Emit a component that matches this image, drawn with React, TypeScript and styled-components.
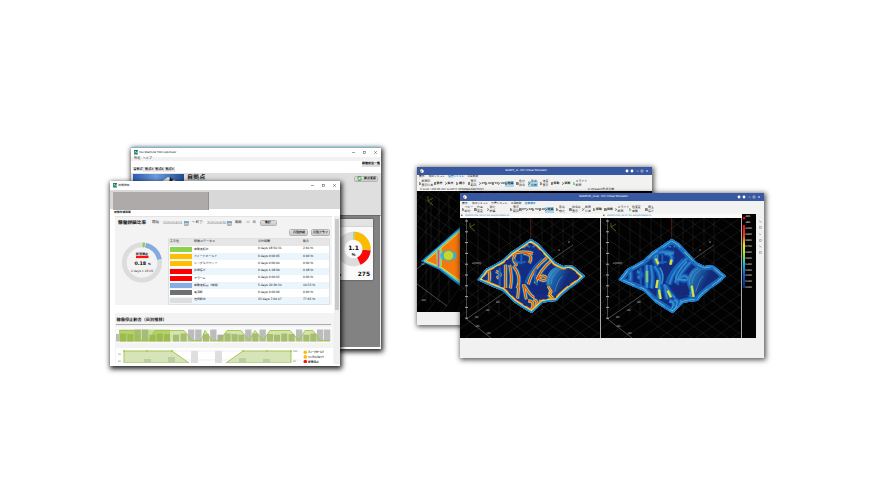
import React from "react";
import styled, { createGlobalStyle } from "styled-components";

const Global = createGlobalStyle`
  * { box-sizing: border-box; }
  body { margin: 0; background: #fff; font-family: "Liberation Sans", "Noto Sans CJK JP", sans-serif; text-rendering: geometricPrecision; }
  svg { display: block; flex: none; }
`;

const Canvas = styled.main`
  position: relative;
  width: 880px;
  height: 496px;
  overflow: hidden;
  background: #fff;
`;

const Window = styled.section<{ $x: number; $y: number; $w: number; $h: number; $accent?: string; $soft?: boolean }>`
  position: absolute;
  left: ${(p) => p.$x}px;
  top: ${(p) => p.$y}px;
  width: ${(p) => p.$w}px;
  height: ${(p) => p.$h}px;
  display: flex;
  flex-direction: column;
  overflow: visible;
  background: #fff;
  border-top: ${(p) => (p.$accent ? `1px solid ${p.$accent}` : "none")};
  box-shadow: ${(p) => (p.$soft ? "1px 1px 5px 1px rgba(0,0,0,.66)" : "1px 2px 5px 1px rgba(0,0,0,.86)")};
`;

const Text = styled.span<{ $s?: number; $w?: number; $c?: string; $b?: boolean; $ml?: number }>`
  flex: none;
  display: inline-block;
  font-size: ${(p) => p.$s ?? 3.4}px;
  line-height: 1.15;
  width: ${(p) => (p.$w ? `${p.$w}px` : "auto")};
  margin-left: ${(p) => p.$ml ?? 0}px;
  color: ${(p) => p.$c ?? "#1a1a1a"};
  font-weight: ${(p) => (p.$b ? 700 : 400)};
  white-space: nowrap;
`;

const Bar = styled.div<{ $h: number; $bg?: string; $pl?: number; $pr?: number }>`
  flex: none;
  display: flex;
  align-items: center;
  height: ${(p) => p.$h}px;
  padding-left: ${(p) => p.$pl ?? 0}px;
  padding-right: ${(p) => p.$pr ?? 0}px;
  background: ${(p) => p.$bg ?? "transparent"};
`;

const Spacer = styled.div`flex: 1;`;

const ControlGroup = styled.div`
  display: flex;
  align-items: center;
  gap: 8px;
`;

const WindowControls = () => (
  <ControlGroup>
    <svg width="3" height="3"><path d="M0 1.5H3" stroke="#666" strokeWidth=".6" /></svg>
    <svg width="3" height="3"><rect x=".4" y=".4" width="2.2" height="2.2" fill="none" stroke="#666" strokeWidth=".6" /></svg>
    <svg width="3" height="3"><path d="M.2 .2 2.8 2.8M2.8 .2 .2 2.8" stroke="#555" strokeWidth=".6" /></svg>
  </ControlGroup>
);

const AppIcon = () => (
  <svg width="4.5" height="4.5" viewBox="0 0 9 9"><rect width="9" height="9" fill="#177d69" /><path d="M2 7V2l5 5V2" fill="none" stroke="#d3eee5" strokeWidth="1.2" /></svg>
);

const GrayButton = styled.button<{ $w: number; $h?: number }>`
  flex: none;
  display: flex;
  align-items: center;
  justify-content: center;
  gap: 2px;
  width: ${(p) => p.$w}px;
  height: ${(p) => p.$h ?? 6.5}px;
  padding: 0;
  border: 1px solid #b4b4b4;
  border-radius: 1.5px;
  background: linear-gradient(#e0e0e0, #cacaca);
`;

const FlatButton = styled(GrayButton)`border: none; border-radius: 0; background: #dcdcdc;`;

const Tab = styled.div<{ $on?: boolean }>`
  height: 5px;
  width: ${(p) => (p.$on ? 12 : 10.2)}px;
  display: flex;
  align-items: center;
  justify-content: center;
  background: ${(p) => (p.$on ? "#fff" : "#ececec")};
  box-shadow: inset -.5px .5px #ccc;
`;

const Hero = styled.div`
  flex: none;
  display: flex;
  height: 42.5px;
  padding: 1px 3px 0 2px;
  background: #dfdfdf;
`;

const HeroButton = styled.div`padding-top: 2px;`;

const DarkArea = styled.div`
  flex: none;
  display: flex;
  justify-content: flex-end;
  height: 132px;
  padding: 3px 7px 0 0;
  background: #828282;
  border-top: 1px solid #6a6a6a;
  border-right: 1px solid #eee;
`;

const Card = styled.div`
  display: flex;
  flex-direction: column;
  width: 40px;
  height: 61px;
  background: #fafafa;
  border-radius: 1px;
  box-shadow: 0 0 2px #333;
`;
const CardHead = styled.div`flex: none; height: 8px; background: #e3e3e3; border-bottom: 1px solid #d4d4d4;`;
const CardDonut = styled.div`flex: none; height: 44.5px; padding: 1.5px 0 0 3px;`;
const CardTotal = styled.div`
  display: flex;
  justify-content: space-between;
  padding: 0 3px 0 6px;
  align-items: center;
  font-family: "DejaVu Sans", sans-serif;
`;

const arc = (cx: number, cy: number, r: number, a: number, b: number) => {
  const pt = (t: number) => [cx + r * Math.sin((t * Math.PI) / 180), cy - r * Math.cos((t * Math.PI) / 180)];
  const [x1, y1] = pt(a);
  const [x2, y2] = pt(b);
  return `M${x1} ${y1}A${r} ${r} 0 ${b - a > 180 ? 1 : 0} 1 ${x2} ${y2}`;
};

const MachineWindow = () => (
  <Window $x={131} $y={147} $w={250} $h={202} $accent="#79b8d4">
    <Bar $h={8.5} $pl={2.5} $pr={4}>
      <AppIcon /><Text $ml={1.3} $s={3.05}>NC Machine Tool Optimizer</Text><Spacer /><WindowControls />
    </Bar>
    <Bar $h={4.5} $bg="#f1f1f1" $pl={3}><Text $s={3.2} $w={8.5}>設定</Text><Text $s={3.2}>ヘルプ</Text></Bar>
    <Bar $h={6} $pr={1}><Spacer /><FlatButton $w={18} $h={5}><Text $s={3} $b $c="#000">稼働状況一覧</Text></FlatButton></Bar>
    <Bar $h={5.5} $pl={1}>
      <Tab $on><Text $s={3.2} $b>自拠点</Text></Tab>
      {["拠点2", "拠点3", "拠点4"].map((t) => <Tab key={t}><Text $s={3.2} $b>{t}</Text></Tab>)}
    </Bar>
    <Hero>
      <svg width="51" height="40" viewBox="0 0 51 40">
        <defs><linearGradient id="sky" x1="0" y1="0" x2="1" y2="0"><stop offset="0" stopColor="#2b5cb0" /><stop offset=".45" stopColor="#6f9cdd" /><stop offset="1" stopColor="#204a96" /></linearGradient></defs>
        <rect width="51" height="40" fill="url(#sky)" />
        <path d="M28 8 35 3 43 7 40 9Z" fill="#e6e8ec" /><path d="M37 3 42 7 40 6 38 9H36Z" fill="#20242b" />
      </svg>
      <Text $ml={3} $s={6.1} $b $c="#222">自拠点</Text>
      <Spacer />
      <HeroButton><GrayButton $w={24}><svg width="5" height="5" viewBox="0 0 5 5"><path d="M.7 2.5A1.8 1.8 0 0 1 4 1.4M4.3 2.5A1.8 1.8 0 0 1 1 3.6" fill="none" stroke="#35a745" strokeWidth="1.1" /></svg><Text $s={3} $b>拠点更新</Text></GrayButton></HeroButton>
    </Hero>
    <DarkArea>
      <Card>
        <CardHead />
        <CardDonut>
          <svg width="37" height="40" viewBox="0 0 37 40">
            <g fill="none" strokeWidth="8">
              <circle cx="17.5" cy="20" r="13.2" stroke="#dcdcdc" />
              <path d={arc(17.5, 20, 13.2, 0, 4)} stroke="#7ccc52" />
              <path d={arc(17.5, 20, 13.2, 5, 93)} stroke="#fdbb00" />
              <path d={arc(17.5, 20, 13.2, 95, 156)} stroke="#fd0808" />
            </g>
            <text x="17.5" y="20.5" textAnchor="middle" fontSize="6" fontWeight="700" fontFamily="DejaVu Sans">1.1</text>
            <text x="17.5" y="26.5" textAnchor="middle" fontSize="4.2" fontWeight="700">%</text>
          </svg>
        </CardDonut>
        <CardTotal><Text $s={4} $b $c="#111">s</Text><Text $s={5.9} $b $c="#111">275</Text></CardTotal>
      </Card>
    </DarkArea>
  </Window>
);

const Ribbon = styled.div`
  flex: none;
  display: flex;
  align-items: flex-start;
  height: 19px;
  padding: 1.5px 0 0 3px;
  background: #d8d8d8;
`;
const RibbonBlock = styled.div`width: 96px; height: 18px; background: #aeaaa9; border-right: 1px solid #959292;`;

const Body = styled.div`
  flex: none;
  display: flex;
  height: 148px;
  padding-left: 3.5px;
`;
const BodyMain = styled.div`width: 220.5px; display: flex; flex-direction: column;`;
const ScrollTrack = styled.div`
  display: flex;
  flex-direction: column;
  align-items: center;
  width: 5.5px;
  background: #efefef;
  &::before { content: ""; width: 4px; height: 91px; margin-top: 3px; background: #c9c9c9; }
`;
const Panel = styled.div<{ $h: number }>`
  flex: none;
  display: flex;
  flex-direction: column;
  height: ${(p) => p.$h}px;
  margin: 0 2px 0 1.5px;
  padding-left: 3px;
  background: #f3f3f3;
  border-top: 1px solid #e4e4e4;
`;
const Summary = styled.div`display: flex; gap: 6px;`;
const ActionRow = styled.div`display: flex; flex: none; justify-content: flex-end; gap: 3px; height: 9.5px; padding-right: 2px;`;

const Table = styled.div`width: 160px; box-shadow: 0 0 0 .5px #ccc;`;
const TableRow = styled.div<{ $head?: boolean; $alt?: boolean }>`
  display: grid;
  grid-template-columns: 24px 64px 45px 1fr;
  align-items: center;
  height: 7.25px;
  background: ${(p) => (p.$head ? "#e6e6e6" : p.$alt ? "#eaf5fc" : "#fff")};
  & > span { padding-left: 1.5px; }
`;
const Swatch = styled.i<{ $c: string }>`height: 5px; margin: 0 .5px 0 1px; background: ${(p) => p.$c};`;

const rows: [string, string, string, string][] = [
  ["#8ed14b", "自動運転中", "0 days 18:59:31", "2.64 %"],
  ["#ffbe00", "フィードホールド", "0 days 0:00:05", "0.00 %"],
  ["#ffbe00", "シングルブロック", "0 days 0:00:04", "0.00 %"],
  ["#fe0000", "非常停止", "0 days 1:18:09", "0.18 %"],
  ["#fe0000", "アラーム", "0 days 0:00:02", "0.00 %"],
  ["#87aee0", "自動運転完（待機）", "5 days 20:36:34", "19.53 %"],
  ["#707070", "電源断", "0 days 0:00:00", "0.00 %"],
  ["#dedede", "通信断中", "23 days 7:04:47", "77.65 %"],
];

const CalendarIcon = () => (
  <svg width="5" height="5" viewBox="0 0 5 5"><rect x=".3" y=".3" width="4.4" height="4.4" fill="#dce5eb" stroke="#788b99" strokeWidth=".5" /><path d="M.3 1.2H4.7" stroke="#4689b5" /><path d="M1 3H4M1 4H4" stroke="#7a8792" strokeWidth=".4" /></svg>
);

const dailyLine = "M119 330H134L141 340H148L155 330H184L192 340H201L205 330L212 340H220L227 330H241L249 340L255 330L263 340L270 330H290L299 340L305 330H313L320 340H330";
const tallBars = [134.5, 142, 188, 195.2, 210.2, 245.2, 259.5, 296, 317, 324];
const shortBars = [120, 127.3, 149.5, 156.7, 164, 173, 180.5, 203, 217.5, 224.5, 231.5, 238.3, 252.3, 267, 274, 281.2, 288.5, 303.3, 310.3];

const DailyChart = () => (
  <svg width="216" height="16" viewBox="116 326.5 216 16">
    <rect x="116" y="326.5" width="216" height="16" fill="#fafafa" />
    <rect x="116" y="333.5" width="3" height="7.5" fill="#bcbcbc" />
    {tallBars.map((x) => <rect key={x} x={x} y="329" width="6.3" height="12" fill="#bcbcbc" />)}
    {shortBars.map((x, i) => <rect key={x} x={x} y={333 + (i % 3) * .6} width="6.1" height={8 - (i % 3) * .6} fill="#aab08f" />)}
    <path d={`${dailyLine}V341H119Z`} fill="#a7cb55" fillOpacity=".46" />
    <rect x="119" y="329" width="51" height="12" fill="#8fbb25" fillOpacity=".45" />
    <path d={dailyLine} fill="none" stroke="#9fc44b" strokeWidth=".9" />
  </svg>
);
const DetailChart = () => (
  <svg width="217" height="15" viewBox="116 348 217 15">
    <rect x="115" y="348" width="218" height="15" fill="#fff" />
    <path d="M123 351H300M123 360H300" stroke="#ddd" strokeWidth=".5" />
    <path d="M124 351H172L189 363H124ZM226 363 243 351H291V363Z" fill="#d7e4b7" stroke="#a7c75b" />
    {[[144, 359], [168, 357], [239, 358], [263, 359]].map(([x, y]) => <rect key={x} x={x} y={y} width="7" height={363 - y} fill="#becda0" />)}
    {[191, 215].map((x) => <rect key={x} x={x} y="351" width="7" height="12" fill="#dedede" />)}
    {[124, 147, 172, 243, 267, 291].map((x) => <circle key={x} cx={x} cy="351" r="1" fill="#a7c75b" />)}
    <g fontSize="2.5" fill="#777"><text x="118" y="355">90</text><text x="118" y="362">80</text><text x="293" y="352">100</text><text x="293" y="362">80</text></g>
    {["フィードホールド", "シングルブロック", "非常停止"].map((t, i) => (
      <g key={t}><circle cx="305.3" cy={352.3 + i * 4.6} r="1.8" fill={i < 2 ? "#ffb900" : "#f11"} /><text x="308" y={353.4 + i * 4.6} fontSize="3" fontWeight="700" fill="#222" textLength={i < 2 ? 16 : 11} lengthAdjust="spacingAndGlyphs">{t}</text></g>
    ))}
  </svg>
);

const DonutBox = styled.div`width: 44.5px; padding: 2px 0 0 2.6px;`;
const ChartTitle = styled.div`flex: none; height: 9px; border-bottom: 1px solid #aaa; width: 215px; display: flex; align-items: center;`;
const ChartPanel = styled.div`
  flex: none;
  height: 50px;
  display: flex;
  flex-direction: column;
  margin: 8px 0 0 1.5px;
  padding: 3px 0 0 1px;
  background: #f3f3f3;
`;
const Gap = styled.div<{ $h: number }>`height: ${(p) => p.$h}px; flex: none;`;

const StatusWindow = () => (
  <Window $x={110} $y={181} $w={230} $h={185}>
    <Bar $h={9} $pl={2.5} $pr={4}><AppIcon /><Text $ml={1.2} $s={2.8}>稼働詳細</Text><Spacer /><WindowControls /></Bar>
    <Ribbon><RibbonBlock /></Ribbon>
    <Bar $h={7} $pl={4}><Text $s={2.8} $b>稼働詳細画面</Text></Bar>
    <Body>
      <BodyMain>
        <Panel $h={89}>
          <Bar $h={12}>
            <Text $s={4.7} $b $c="#111" $w={34}>稼働詳細比率</Text>
            <Text $s={3.4} $w={11}>開始:</Text><Text $s={3.9} $c="#777" $w={20.5}>2020/04/01</Text><CalendarIcon />
            <Text $s={3.4} $w={15.5} $ml={3}>〜 終了:</Text><Text $s={3.9} $c="#777" $w={20}>2020/04/30</Text><CalendarIcon />
            <Text $s={3.3} $w={11} $ml={3}>期間</Text><Text $s={3.2} $c="#999" $w={6.5}>30</Text><Text $s={3.3} $w={7}>日</Text>
            <GrayButton $w={17.5}><Text $s={3.2} $b>集計</Text></GrayButton>
          </Bar>
          <ActionRow><GrayButton $w={19}><Text $s={3} $b>日別詳細</Text></GrayButton><GrayButton $w={19}><Text $s={3} $b>日別グラフ</Text></GrayButton></ActionRow>
          <Summary>
            <DonutBox>
              <svg width="42" height="44" viewBox="0 0 42 44">
                <g fill="none" strokeWidth="4.7">
                  <circle cx="21" cy="21.5" r="17.7" stroke="#dcdcdc" />
                  <path d={arc(21, 21.5, 17.7, 2, 9)} stroke="#8acd4c" /><path d={arc(21, 21.5, 17.7, 12, 80)} stroke="#82abe0" />
                </g>
                <text x="21" y="13.7" textAnchor="middle" fontSize="3.1" fontWeight="700">非常停止</text><rect x="15" y="14.8" width="12.5" height="2.3" fill="#f11" />
                <text x="19.3" y="24" textAnchor="middle" fontSize="4.8" fontWeight="700" fontFamily="DejaVu Sans">0.18</text><text x="27" y="24" fontSize="3.2" fontWeight="700">%</text>
                <text x="21" y="30.8" textAnchor="middle" fontSize="3.4" fill="#444">0 days 1:18:09</text>
              </svg>
            </DonutBox>
            <Table>
              <TableRow $head><Text $s={3}>表示色</Text><Text $s={3}>稼働ステータス</Text><Text $s={3}>合計時間</Text><Text $s={3}>割合</Text></TableRow>
              {rows.map(([color, name, time, ratio], i) => (
                <TableRow key={name} $alt={i % 2 === 1}><Swatch $c={color} /><Text $s={2.9}>{name}</Text><Text $s={3.3}>{time}</Text><Text $s={3.3}>{ratio}</Text></TableRow>
              ))}
            </Table>
          </Summary>
        </Panel>
        <ChartPanel>
          <ChartTitle><Text $s={4.2} $b $c="#111" $ml={.5}>稼働停止割合（日別推移）</Text></ChartTitle>
          <Gap $h={1.5} />
          <DailyChart /><Gap $h={5.5} /><DetailChart />
        </ChartPanel>
      </BodyMain>
      <ScrollTrack />
    </Body>
  </Window>
);

const outline = "M170 14 192 28 215 52 245 85 268 96Q286 91 298 96L334 127 310 148 285 165 262 185 248 201 225 203 205 207 190 222 173 238 150 224 120 205 85 170 50 156 10 138 35 105 60 92 85 78 110 55 135 38Z";
const ridges = [
  "M95 92V162", "M107 93Q116 130 109 163", "M118 96Q145 128 130 163", "M66 112Q90 122 68 132", "M44 106Q50 128 44 145",
  "M124 60Q112 80 130 94", "M148 57Q181 62 166 87", "M112 62Q138 48 177 58", "M218 72Q174 105 163 151", "M235 77Q197 108 184 148",
  "M134 158 131 193", "M148 151 157 196", "M151 154Q172 190 181 190", "M193 133Q208 118 220 134 209 145 193 133",
  "M225 151 231 173 224 182 236 195", "M163 200Q184 202 174 224", "M178 197Q193 199 187 214",
];

const Surface = ({ id, cool }: { id: string; cool?: boolean }) => {
  const layers: [string, number][] = cool
    ? [["#124fae", 16], ["#2172c2", 8], ["#3391c8", 3]]
    : [["#1560c4", 13], ["#33b8dc", 8.5], ["#f4d72d", 6.5], ["#e94712", 4]];
  return (
    <g transform="translate(14 16) scale(.33333)">
      <clipPath id={`${id}-clip`}><path d={outline} /></clipPath>
      <linearGradient id={`${id}-dome`} x1="0" y1=".2" x2="1" y2=".6"><stop offset="0" stopColor={cool ? "#2e88c8" : "#3f9ed0"} /><stop offset=".28" stopColor="#1c5faa" /><stop offset=".55" stopColor="#132b79" /><stop offset="1" stopColor="#172a75" /></linearGradient>
      <g clipPath={`url(#${id}-clip)`} fill="none" strokeLinejoin="round">
        <path d={outline} fill="#142d80" />
        {layers.map(([color, width]) => <g key={color} stroke={color} strokeWidth={width}>{ridges.map((d) => <path key={d} d={d} />)}</g>)}
        <path d="M150 43Q156 28 168 40M176 40Q184 28 196 43" stroke="#2273c6" strokeWidth="5" />
        <path d="M120 76Q132 92 155 83M142 61V91M204 75Q163 112 154 148M77 101V158M188 105Q176 132 190 154" stroke="#1662bb" strokeWidth="6" />
        <path d="M217 152Q216 98 268 92L303 96 330 127Q278 150 240 189Z" fill={`url(#${id}-dome)`} />
        <path d="M231 151Q233 112 273 99M224 153Q218 119 257 99M242 174Q250 141 265 126" stroke="#4ba0c2" strokeWidth="3" opacity=".65" />
        <path d="M172 155H217L224 184 188 181Z" fill="#152978" />
        {cool && <path d="M96 97V160M128 62V92M150 60H172M134 100Q150 122 140 150M216 82Q184 112 180 146M186 137H214" stroke="#3490cc" strokeWidth="4.5" />}
        {cool && <path d="M122 74 130 90M170 77 166 92M128 138 124 162M132 167 137 195M158 170 168 190M230 155 236 190M96 110V145" stroke="#7cc57c" strokeWidth="8" />}
        {cool && <path d="M122 74 130 90M170 77 166 92M128 138 124 162M132 167 137 195M158 170 168 190M230 155 236 190" stroke="#e5e32d" strokeWidth="5" />}
        {!cool && <path d="M222 157 232 173 227 182 237 192" stroke="#f1c62d" strokeWidth="8" />}
        {!cool && <path d="M222 157 232 173 227 182 237 192" stroke="#e54815" strokeWidth="3" />}
        <path d={outline} stroke={cool ? "#1b68bb" : "#ee6e18"} strokeWidth={cool ? 27 : 22} strokeDasharray={cool ? undefined : "46 13 21 9"} />
        <path d={outline} stroke={cool ? "#7cc9a2" : "#f6dc3b"} strokeWidth={cool ? 14 : 17} strokeDasharray={cool ? "38 17" : undefined} />
        <path d={outline} stroke={cool ? "#2f97dc" : "#32b5df"} strokeWidth={cool ? 11 : 11} />
        <path d={outline} stroke="#1674d4" strokeWidth="7" />
        <path d="M163 205Q182 201 170 225M178 200Q192 199 182 219M196 197Q202 203 194 210" stroke={cool ? "#3ca8d8" : "#efa82c"} strokeWidth="3" />
      </g>
    </g>
  );
};

const PlotGrid = ({ w, h }: { w: number; h: number }) => (
  <g fill="none">
    <g stroke="#777" strokeOpacity=".36" strokeWidth=".45">
      {[18, 29, 39, 50, 60, 72, 82, 92, 103, 113].map((x) => <path key={x} d={`M${x} 0V${105 - Math.abs(x - 55) * .35}`} />)}
      {Array.from({ length: 13 }, (_, i) => <path key={i} d={`M${i * 18 - 85} ${h} L${i * 18 + 85} 0`} />)}
      {Array.from({ length: 13 }, (_, i) => <path key={`d${i}`} d={`M${i * 18 - 95} 0 L${i * 18 + 73} ${h}`} />)}
    </g>
    <path d={`M6.5 1V101L31 ${h}M6.5 101L${Math.min(w, 113)} 27`} stroke="#777" strokeWidth=".6" />
    {Array.from({ length: 10 }, (_, i) => <path key={i} d={`M5 ${3 + i * 10.8}h3`} stroke="#aaa" strokeWidth="1" />)}
    <path d="M10 5v4l5-3M10 9l5 4" stroke="#7c741f" strokeWidth=".7" />
    <g fill="#ccc" fontSize="3.1"><text x="12" y="46">Z(mm)</text><text x="36" y="85">20</text><text x="26" y="93">40</text><text x="15" y="100">60</text><text x="15" y="109">-20</text><text x="26" y="116">-40</text><text x="98" y="33">4</text><text x="108" y="25">2</text></g>
  </g>
);

const SimTitle = styled.div<{ $h: number }>`
  flex: none;
  display: grid;
  grid-template-columns: 29px 1fr 46px;
  align-items: center;
  height: ${(p) => p.$h}px;
  padding: 0 3px;
  background: #3858a2;
  color: white;
  text-align: center;
`;
const SimControls = styled.div`display: flex; justify-content: flex-end;`;
const Plots = styled.div<{ $h: number }>`flex: none; display: flex; height: ${(p) => p.$h}px; background: #030303;`;
const Divider = styled.div`width: 1.4px; background: #aaa;`;
const PlotSvg = styled.svg`background: #020202;`;

const SimHeader = ({ title, h }: { title: string; h: number }) => (
  <SimTitle $h={h}>
    <svg width="4" height="4"><path d="M0 1 2 0 4 2 3 4 1 3.5Z" fill="#fff" /><path d="M0 2 2 1V4Z" fill="#f7ae30" /></svg>
    <Text $s={2.95} $c="#fff">{title}</Text>
    <SimControls>
      <svg width="24" height="4"><g fill="#fff"><circle cx="2" cy="2" r="1.4" /><circle cx="7" cy="2" r="1.4" /></g><path d="M11.5 2h2M16 1h2v2h-2zM21 1l2 2m0-2-2 2" fill="none" stroke="#cbd5ef" strokeWidth=".6" /></svg>
    </SimControls>
  </SimTitle>
);

const MenuRow = styled.div<{ $h: number }>`
  flex: none;
  display: flex;
  align-items: center;
  gap: 3.3px;
  height: ${(p) => p.$h}px;
  padding-left: 2px;
  background: #f2f2f1;
`;
const ToolRow = styled.div<{ $h: number }>`
  flex: none;
  display: flex;
  align-items: center;
  height: ${(p) => p.$h}px;
  padding-left: 1.5px;
  background: #f2f2f1;
`;
const ToolCell = styled.div<{ $w: number }>`flex: none; width: ${(p) => p.$w}px; display: flex;`;
const Tool = styled.div<{ $active?: boolean }>`
  display: flex;
  align-items: center;
  height: 6px;
  gap: .5px;
  width: ${(p) => (p.$active ? "9.5px" : "auto")};
  background: ${(p) => (p.$active ? "#a8d8ef" : "transparent")};
`;
const Stack = styled.div`display: flex; flex-direction: column; line-height: 1;`;
const ToolMark = ({ n }: { n: number }) => (
  <svg width="2.6" height="3.4" viewBox="0 0 3 4"><path d={n % 3 === 0 ? "M.3.3 2.5 2 .3 3.7Z" : n % 3 === 1 ? "M.3.5h2.3v3H.3zM.3 2h2.3" : "M.3 3.5 2.7.5M.3.5l1 1"} fill="none" stroke={n === 15 ? "#25b968" : "#444"} strokeWidth=".8" /></svg>
);

type ToolItem = [number, string, string?];
const toolsC: ToolItem[] = [
  [15, "断面図", "表示位置"], [11, "部分"], [11.5, "拡大"], [11.5, "縮小"], [11, "表示", "範囲"], [6.5, "XY"], [6.5, "XZ"], [6.5, "YZ"], [6.5, "3D"],
  [11.5, "経路"], [12, "色分", "指令"], [11.5, "形状", "比較"], [11, "速度", "表示"], [11, "移動"], [11, "回転"], [15, "スライド", "断面"],
];
const toolsD: ToolItem[] = [
  [12.5, "コピー", "貼付"], [12.5, "倍率", "変更"], [23.5, "測定", "結果"], [9, "表示", "範囲"], [6.5, "XY"], [6.5, "XZ"], [6.5, "YZ"], [6, "3D"],
  [11.5, "経路"], [13, "原点", "設定"], [13, "指令点", "表示"], [11, "断面", "位置"], [11, "移動"], [10.5, "回転"], [14.5, "スライド", "断面"], [16, "色変更", "自動"], [12, "再生", "停止"],
];

const Toolbar = ({ items, h, active }: { items: ToolItem[]; h: number; active: number[] }) => (
  <ToolRow $h={h}>
    {items.map(([w, a, b], i) => (
      <ToolCell key={i} $w={w}>
        <Tool $active={active.includes(i)}><ToolMark n={i} /><Stack><Text $s={2.9} $b={!b}>{a}</Text>{b && <Text $s={2.9}>{b}</Text>}</Stack></Tool>
      </ToolCell>
    ))}
  </ToolRow>
);

const BackSimulator = () => (
  <Window $x={417} $y={167} $w={235} $h={158} $soft>
    <SimHeader title="GUIDT_A - NC Virtual Simulator" h={7.5} />
    <MenuRow $h={5}>
      <Text $s={2.7} $w={6.4}>表示</Text><Text $s={2.7}>加工シミュレ</Text><Text $s={2.7} $b $c="#207fc0">位置シミュレ</Text><Text $s={2.7}>工具軌跡</Text>
    </MenuRow>
    <Toolbar items={toolsC} h={8} active={[9, 11]} />
    <Bar $h={3.5} $pl={3} $bg="#f7f7f7"><Text $s={2.9}>0.1234 / 100.00 mm 12345 C:¥PROGRAM¥TEST</Text><Spacer /><Text $s={2.9} $w={64}>C:¥Param¥形状比較</Text></Bar>
    <Plots $h={121}>
      <PlotSvg width="235" height="121" viewBox="0 0 235 121">
        <g stroke="#777" strokeOpacity=".38" strokeWidth=".45">
          {[9, 14, 22, 32].map((x) => <path key={x} d={`M${x} 5V112`} />)}
          {Array.from({ length: 9 }, (_, i) => <path key={i} d={`M${i * 15 - 80} 121 L${i * 15 + 8} 0M${i * 15 - 50} 0L${i * 15 + 50} 70`} />)}
        </g>
        <path d="M0 78 14 67M0 93 30 115" stroke="#777" strokeWidth=".6" />
        <path d="M11 5v5l5-3M11 10l5 4" fill="none" stroke="#7c741f" strokeWidth=".7" />
        <g fill="#ccc" fontSize="3"><text x="4" y="74">40</text><text x="4" y="110">-20</text></g>
        <path d="M6 70 45 36V95L23 78Z" fill="#f4780e" stroke="#1476ce" strokeWidth="2.4" />
        <path d="M7 70 45 37M7 70 24 77 45 93" fill="none" stroke="#58d8ba" strokeWidth="1.6" />
        <path d="M9 70 45 39M9 70 24 76 45 91" fill="none" stroke="#f7d732" strokeWidth="1" />
        <path d="M19 60 20 75H25V57Z" fill="#98d16b" /><path d="M21.5 59V76" stroke="#d743a3" strokeWidth="1.6" />
        <ellipse cx="31.5" cy="64.5" rx="8.3" ry="5.3" fill="#42b3c7" /><ellipse cx="31.5" cy="64.5" rx="5.2" ry="5" fill="#c7d62a" stroke="#43a6a8" strokeWidth=".7" />
      </PlotSvg>
    </Plots>
    <Bar $h={13} $bg="#f1f1f1" />
  </Window>
);

const SideTools = styled.div`
  display: flex;
  flex-direction: column;
  align-items: center;
  gap: 3.5px;
  width: 7.6px;
  padding-top: 6px;
  background: #f1f1f1;
`;
const FrontRight = styled.div`display: flex; width: 22.2px; height: 124px; margin-top: -4px;`;

const FrontSimulator = () => (
  <Window $x={460} $y={193} $w={304} $h={165} $soft>
    <SimHeader title="SAMPLE_local - NC Virtual Simulator" h={8} />
    <MenuRow $h={4.5}>
      <Text $s={2.7} $w={6.7}>表示</Text><Text $s={2.7}>加工シミュレ</Text><Text $s={2.7}>位置シミュレ</Text><Text $s={2.7}>工具軌跡</Text><Text $s={2.7} $b $c="#207fc0">比較表示</Text>
    </MenuRow>
    <Toolbar items={toolsD} h={8.5} active={[8]} />
    <Bar $h={4} $pl={1} $bg="#fafafa"><Text $s={2.5} $w={4}>■</Text><Text $s={2.7} $c="#267db5" $w={138}>2020/04/01 12:34:56 sample¥data.nc</Text><Text $s={2.5} $w={4}>■</Text><Text $s={2.7} $c="#267db5">2020/04/01 12:34:56 sample¥data.nc</Text></Bar>
    <Plots $h={120}>
      {[false, true].map((cool) => (
        <React.Fragment key={String(cool)}>
          <PlotSvg width="139.6" height="120" viewBox="0 0 139.6 120">
            <PlotGrid w={139} h={120} />
            <path d="M70.5 0V22" stroke="#702624" strokeWidth=".6" />
            <Surface id={cool ? "cool" : "warm"} cool={cool} />
          </PlotSvg>
          <Divider />
        </React.Fragment>
      ))}
      <FrontRight>
        <PlotSvg width="14.6" height="124" viewBox="0 0 14.6 124">
          <defs><linearGradient id="scale" x1="0" y1="0" x2="0" y2="1"><stop offset="0" stopColor="#f00808" /><stop offset=".16" stopColor="#e73813" /><stop offset=".32" stopColor="#f2e42c" /><stop offset=".48" stopColor="#9cd93e" /><stop offset=".61" stopColor="#26bfd0" /><stop offset=".78" stopColor="#165fc7" /><stop offset="1" stopColor="#142567" /></linearGradient></defs>
          <rect x=".8" y="11" width="2.2" height="63" fill="url(#scale)" /><circle cx="2" cy="4" r="1.4" fill="#f00" />
          {[".500", ".450", "1.000", "0.900", "0.800", "0.700", "0.600", "0.500", "0.400", "0.300", "0.200", "0.100", "0.000"].map((t, i) => <text key={i} x="3.2" y={3 + i * 5.95} fontSize="2.6" fontWeight="700" fill="#ddd">{t}</text>)}
        </PlotSvg>
        <SideTools>{Array.from({ length: 6 }, (_, i) => <svg key={i} width="2.8" height="2.8" viewBox="0 0 3 3"><path d={i % 2 ? "M.5.5h2v2h-2z" : "M.3.5 2.6 2.8M.5 1.8h1.3"} fill="none" stroke="#888" strokeWidth=".6" /></svg>)}</SideTools>
      </FrontRight>
    </Plots>
    <Bar $h={20} $bg="#f1f1f1" />
  </Window>
);

export default function App() {
  return (
    <><Global /><Canvas><MachineWindow /><StatusWindow /><BackSimulator /><FrontSimulator /></Canvas></>
  );
}
